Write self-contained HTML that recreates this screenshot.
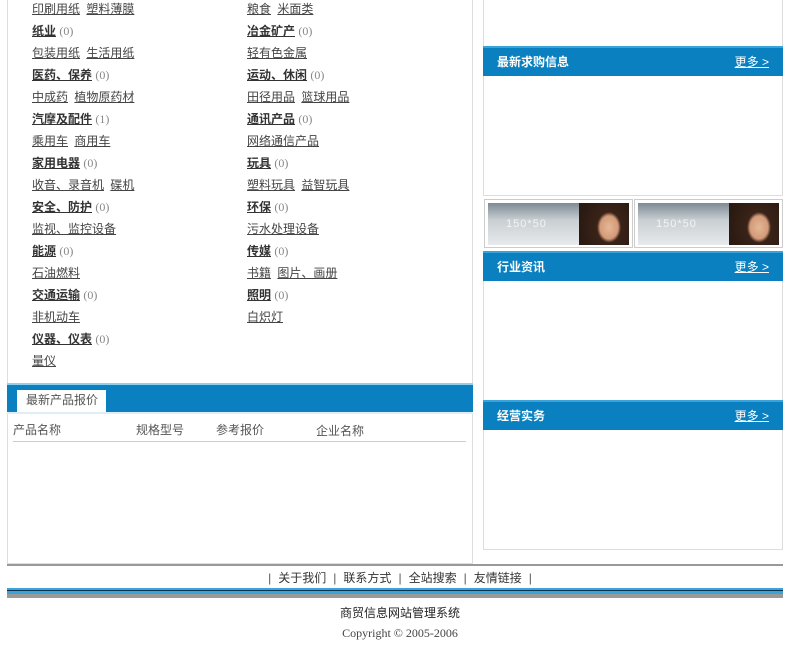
<!DOCTYPE html>
<html><head><meta charset="utf-8"><style>
*{margin:0;padding:0;box-sizing:border-box}
body{width:800px;height:654px;background:#fff;position:relative;font-family:"Liberation Sans","Noto Sans CJK SC","WenQuanYi Zen Hei",sans-serif;font-size:12px;color:#444;overflow:hidden}
.a{position:absolute;white-space:nowrap;line-height:14px}
.u{text-decoration:underline;color:#444}
.u+.u{margin-left:3px}
b.u{color:#333}
.n{color:#888;font-family:"Liberation Serif",serif}
.box{position:absolute;border:1px solid #ddd}
.bar{position:absolute;background:#0a80c0;border-top:2px solid #3aa3da;color:#fff;font-weight:bold;font-size:12px}
.bar span{position:absolute;left:14px;top:5px}
.bar i{position:absolute;right:14px;top:5px;font-style:normal;font-weight:normal;text-decoration:underline}
.ban{position:absolute;border:1px solid #ccc;background:#fff}
.ban div{position:absolute;left:3px;top:3px;width:141px;height:42px;background:linear-gradient(#7d8a94,#c8ced2 40%,#e8eaec);overflow:hidden}
.ban div span{position:absolute;left:18px;top:15px;color:#f4f4f4;font-size:11px;letter-spacing:1px}
.ban div em{position:absolute;right:0;top:0;width:50px;height:42px;background:radial-gradient(ellipse 11px 14px at 60% 58%,#e6b896 0,#d39a78 9px,#3a2318 12px,#2a1a12 30px)}
.f b{font-weight:normal;margin:0 7px;color:#555}
</style></head><body>
<div class="box" style="left:7px;top:-1px;width:466px;height:565px;border-top:none"></div>
<div class="a" style="left:32px;top:2px"><span class="u">印刷用纸</span> <span class="u">塑料薄膜</span></div>
<div class="a" style="left:247px;top:2px"><span class="u">粮食</span> <span class="u">米面类</span></div>
<div class="a" style="left:32px;top:24px"><b class="u">纸业</b> <span class="n">(0)</span></div>
<div class="a" style="left:247px;top:24px"><b class="u">冶金矿产</b> <span class="n">(0)</span></div>
<div class="a" style="left:32px;top:46px"><span class="u">包装用纸</span> <span class="u">生活用纸</span></div>
<div class="a" style="left:247px;top:46px"><span class="u">轻有色金属</span></div>
<div class="a" style="left:32px;top:68px"><b class="u">医药、保养</b> <span class="n">(0)</span></div>
<div class="a" style="left:247px;top:68px"><b class="u">运动、休闲</b> <span class="n">(0)</span></div>
<div class="a" style="left:32px;top:90px"><span class="u">中成药</span> <span class="u">植物原药材</span></div>
<div class="a" style="left:247px;top:90px"><span class="u">田径用品</span> <span class="u">篮球用品</span></div>
<div class="a" style="left:32px;top:112px"><b class="u">汽摩及配件</b> <span class="n">(1)</span></div>
<div class="a" style="left:247px;top:112px"><b class="u">通讯产品</b> <span class="n">(0)</span></div>
<div class="a" style="left:32px;top:134px"><span class="u">乘用车</span> <span class="u">商用车</span></div>
<div class="a" style="left:247px;top:134px"><span class="u">网络通信产品</span></div>
<div class="a" style="left:32px;top:156px"><b class="u">家用电器</b> <span class="n">(0)</span></div>
<div class="a" style="left:247px;top:156px"><b class="u">玩具</b> <span class="n">(0)</span></div>
<div class="a" style="left:32px;top:178px"><span class="u">收音、录音机</span> <span class="u">碟机</span></div>
<div class="a" style="left:247px;top:178px"><span class="u">塑料玩具</span> <span class="u">益智玩具</span></div>
<div class="a" style="left:32px;top:200px"><b class="u">安全、防护</b> <span class="n">(0)</span></div>
<div class="a" style="left:247px;top:200px"><b class="u">环保</b> <span class="n">(0)</span></div>
<div class="a" style="left:32px;top:222px"><span class="u">监视、监控设备</span></div>
<div class="a" style="left:247px;top:222px"><span class="u">污水处理设备</span></div>
<div class="a" style="left:32px;top:244px"><b class="u">能源</b> <span class="n">(0)</span></div>
<div class="a" style="left:247px;top:244px"><b class="u">传媒</b> <span class="n">(0)</span></div>
<div class="a" style="left:32px;top:266px"><span class="u">石油燃料</span></div>
<div class="a" style="left:247px;top:266px"><span class="u">书籍</span> <span class="u">图片、画册</span></div>
<div class="a" style="left:32px;top:288px"><b class="u">交通运输</b> <span class="n">(0)</span></div>
<div class="a" style="left:247px;top:288px"><b class="u">照明</b> <span class="n">(0)</span></div>
<div class="a" style="left:32px;top:310px"><span class="u">非机动车</span></div>
<div class="a" style="left:247px;top:310px"><span class="u">白炽灯</span></div>
<div class="a" style="left:32px;top:332px"><b class="u">仪器、仪表</b> <span class="n">(0)</span></div>
<div class="a" style="left:32px;top:354px"><span class="u">量仪</span></div>

<div style="position:absolute;left:7px;top:383px;width:466px;height:29px;background:#0a80c0;border-top:2px solid #8fd0ee"></div>
<div style="position:absolute;left:17px;top:390px;width:89px;height:22px;background:#fff"></div>
<div class="a" style="left:26px;top:393px;color:#555">最新产品报价</div>
<div style="position:absolute;left:7px;top:412px;width:466px;height:2px;background:#dfeef6"></div>
<div class="a" style="left:13px;top:423px;color:#555">产品名称</div>
<div class="a" style="left:136px;top:423px;color:#555">规格型号</div>
<div class="a" style="left:216px;top:423px;color:#555">参考报价</div>
<div class="a" style="left:316px;top:424px;color:#555">企业名称</div>
<div style="position:absolute;left:13px;top:441px;width:453px;height:1px;background:#ccc"></div>

<div class="box" style="left:483px;top:-1px;width:300px;height:197px"></div>
<div class="bar" style="left:483px;top:46px;width:300px;height:30px"><span>最新求购信息</span><i>更多 &gt;</i></div>
<div class="ban" style="left:484px;top:199px;width:149px;height:49px"><div><span>150*50</span><em></em></div></div>
<div class="ban" style="left:634px;top:199px;width:149px;height:49px"><div><span>150*50</span><em></em></div></div>
<div class="box" style="left:483px;top:252px;width:300px;height:298px"></div>
<div class="bar" style="left:483px;top:251px;width:300px;height:30px"><span>行业资讯</span><i>更多 &gt;</i></div>
<div class="bar" style="left:483px;top:400px;width:300px;height:30px"><span>经营实务</span><i>更多 &gt;</i></div>

<div style="position:absolute;left:7px;top:564px;width:776px;height:2px;background:#999"></div>
<div class="a f" style="left:0;width:800px;text-align:center;top:571px;color:#333"><b>|</b>关于我们<b>|</b>联系方式<b>|</b>全站搜索<b>|</b>友情链接<b>|</b></div>
<div style="position:absolute;left:7px;top:588px;width:776px;height:2px;background:#3aa3da"></div>
<div style="position:absolute;left:7px;top:590px;width:776px;height:1px;background:#0a3050"></div>
<div style="position:absolute;left:7px;top:591px;width:776px;height:3px;background:#3aa3da"></div>
<div style="position:absolute;left:7px;top:594px;width:776px;height:4px;background:#999"></div>
<div class="a" style="left:0;width:800px;text-align:center;top:606px;color:#222">商贸信息网站管理系统</div>
<div class="a" style="left:0;width:800px;text-align:center;top:626px;color:#444;font-family:'Liberation Serif',serif">Copyright © 2005-2006</div>
</body></html>
